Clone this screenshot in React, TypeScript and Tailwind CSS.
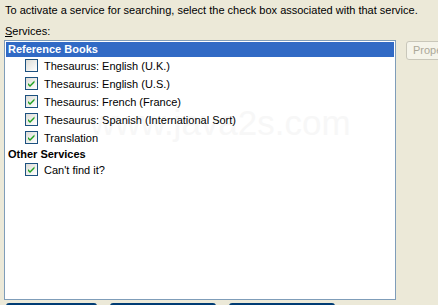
import React from "react";

const Check = ({ checked }: { checked: boolean }) => (
  <span className="inline-block w-[13px] h-[13px] border border-[#1C5180] bg-gradient-to-br from-[#DCDCD7] to-white relative shrink-0 mt-[2px]">
    {checked && (
      <svg width="11" height="11" viewBox="0 0 11 11" className="absolute left-0 top-0">
        <path d="M2 5 L4 7 L8.5 2.5 L8.5 4.5 L4 9 L2 7 Z" fill="#21A121" />
      </svg>
    )}
  </span>
);

const Item = ({ label, checked }: { label: string; checked: boolean }) => (
  <div className="flex items-start h-[18px] pl-[19px] relative z-10">
    <Check checked={checked} />
    <span className="ml-[6px] mt-[3px]">{label}</span>
  </div>
);

export default function App() {
  return (
    <div
      className="w-[438px] h-[305px] bg-[#ECE9D8] overflow-hidden relative text-[11px] leading-[13px] text-black"
      style={{ fontFamily: '"Liberation Sans", Arial, sans-serif' }}
    >
      <div className="pl-[5px] pt-[4px]">
        To activate a service for searching, select the check box associated with that service.
      </div>
      <div className="pl-[5px] pt-[8px]">
        <span className="underline">S</span>ervices:
      </div>
      <div className="flex mt-[2px] pl-[4px]">
        <div className="w-[392px] h-[260px] shrink-0 border border-[#7F9DB9] bg-white p-[1px] relative overflow-hidden">
          <div className="absolute left-[85px] top-[62px] text-[35px] leading-[40px] text-[#F7F7F7] pointer-events-none whitespace-nowrap">
            www.java2s.com
          </div>
          <div className="h-[15px] bg-[#316AC5] text-white font-bold pl-[2px] flex items-center relative z-10">
            Reference Books
          </div>
          <Item label="Thesaurus: English (U.K.)" checked={false} />
          <Item label="Thesaurus: English (U.S.)" checked={true} />
          <Item label="Thesaurus: French (France)" checked={true} />
          <Item label="Thesaurus: Spanish (International Sort)" checked={true} />
          <Item label="Translation" checked={true} />
          <div className="h-[14px] font-bold pl-[2px] flex items-center relative z-10">Other Services</div>
          <Item label="Can't find it?" checked={true} />
        </div>
        <div className="ml-[10px] shrink-0">
          <div className="w-[80px] h-[19px] mt-[1px] border border-[#C9C7BA] rounded-[3px] bg-[#F5F4EA] text-[#ACA899] pl-[6px] flex items-center">
            Properties...
          </div>
        </div>
      </div>
      <div className="flex mt-[3px] pl-[6px] gap-[13px]">
        <div className="w-[91px] h-[23px] shrink-0 border border-t-2 border-[#003C74] rounded-[3px] bg-[#F4F3EE]" />
        <div className="w-[106px] h-[23px] shrink-0 border border-t-2 border-[#003C74] rounded-[3px] bg-[#F4F3EE]" />
        <div className="w-[106px] h-[23px] shrink-0 border border-t-2 border-[#003C74] rounded-[3px] bg-[#F4F3EE]" />
      </div>
    </div>
  );
}
